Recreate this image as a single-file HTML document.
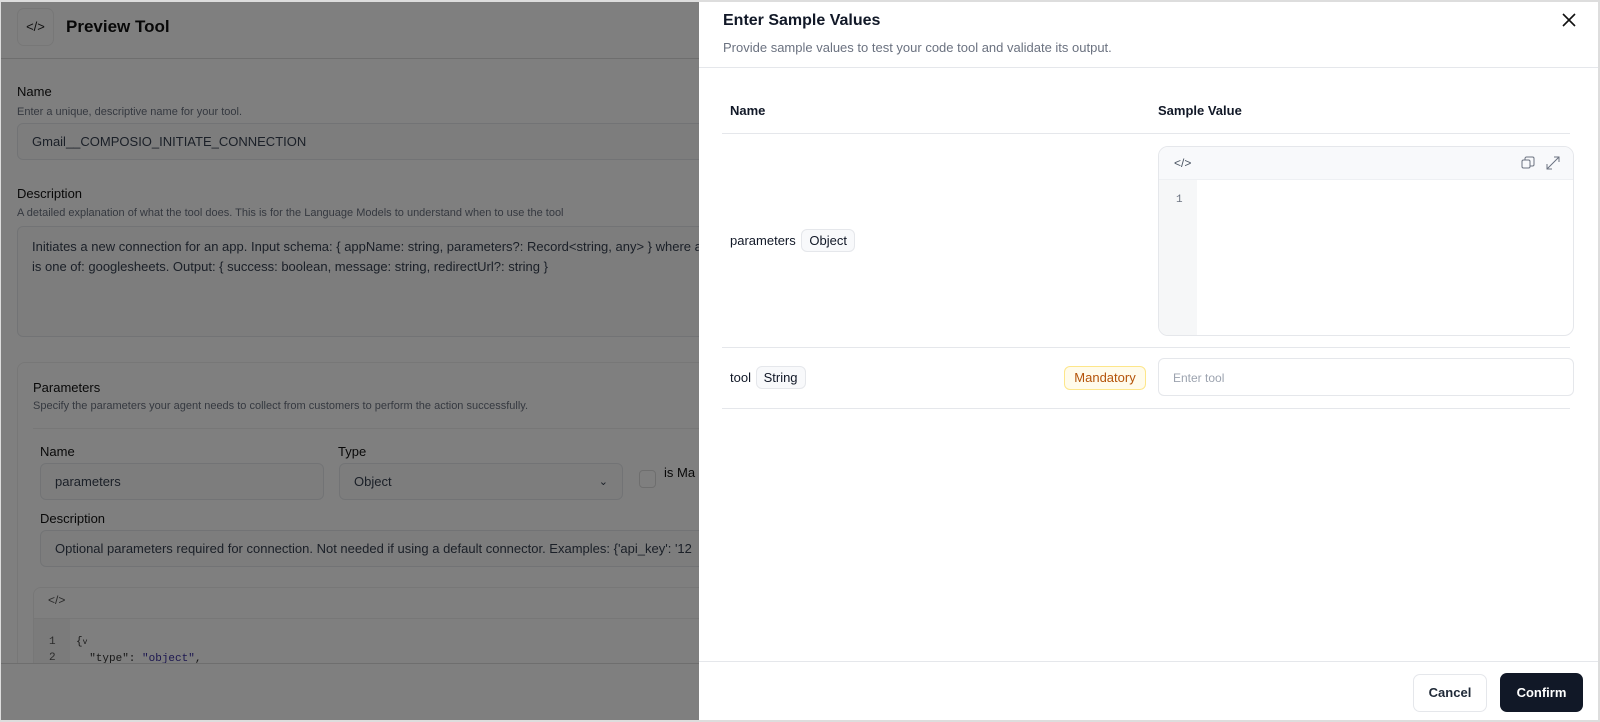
<!DOCTYPE html>
<html><head><meta charset="utf-8"><style>
*{box-sizing:border-box;margin:0;padding:0}
body{width:1600px;height:722px;overflow:hidden;font-family:"Liberation Sans",sans-serif;color:#1f2937;position:relative;background:#fff}
.a{position:absolute}
.pg{position:absolute;left:0;top:0;width:1600px;height:722px;background:#fff}
.lbl{font-size:13px;color:#111}
.hlp{font-size:11px;color:#6b7280}
.inp{border:1px solid #e5e7eb;border-radius:6px;background:#fbfbfb;font-size:13px;color:#374151;padding:0 14px;display:flex;align-items:center}
.ov{position:absolute;left:0;top:0;width:1600px;height:722px;background:rgba(0,0,0,0.5)}
.pn{position:absolute;left:699px;top:2px;width:899px;height:718px;background:#fff}
.badge{display:inline-block;border:1px solid #e5e7eb;background:#f8f9fb;border-radius:6px;font-size:13px;padding:3px 7px;color:#111827}
.mono{font-family:"Liberation Mono",monospace}
</style></head><body>
<div class="pg">
  <div class="a" style="left:17px;top:8px;width:37px;height:38px;border:1px solid #eee;border-radius:7px;font-size:13px;text-align:center;line-height:36px;color:#222">&lt;/&gt;</div>
  <div class="a" style="left:66px;top:17px;font-size:17px;font-weight:600;color:#111">Preview Tool</div>
  <div class="a" style="left:0;top:58px;width:1600px;border-top:1px solid #ddd"></div>
  <div class="a lbl" style="left:17px;top:84px">Name</div>
  <div class="a hlp" style="left:17px;top:106px">Enter a unique, descriptive name for your tool.</div>
  <div class="a inp" style="left:17px;top:123px;width:700px;height:37px">Gmail__COMPOSIO_INITIATE_CONNECTION</div>
  <div class="a lbl" style="left:17px;top:186px">Description</div>
  <div class="a hlp" style="left:17px;top:207px">A detailed explanation of what the tool does. This is for the Language Models to understand when to use the tool</div>
  <div class="a inp" style="left:17px;top:226px;width:700px;height:111px;align-items:flex-start;padding-top:10px;line-height:20px;font-size:13px">Initiates a new connection for an app. Input schema: { appName: string, parameters?: Record&lt;string, any&gt; } where a<br>is one of: googlesheets. Output: { success: boolean, message: string, redirectUrl?: string }</div>
  <div class="a" style="left:17px;top:362px;width:720px;height:320px;border:1px solid #eee;border-radius:8px"></div>
  <div class="a lbl" style="left:33px;top:380px">Parameters</div>
  <div class="a hlp" style="left:33px;top:400px">Specify the parameters your agent needs to collect from customers to perform the action successfully.</div>
  <div class="a" style="left:33px;top:428px;width:700px;border-top:1px solid #eee"></div>
  <div class="a lbl" style="left:40px;top:444px">Name</div>
  <div class="a lbl" style="left:338px;top:444px">Type</div>
  <div class="a inp" style="left:40px;top:463px;width:284px;height:37px">parameters</div>
  <div class="a inp" style="left:339px;top:463px;width:284px;height:37px;justify-content:space-between">Object<span style="font-size:11px">&#8964;</span></div>
  <div class="a" style="left:639px;top:470px;width:17px;height:18px;border:1px solid #ddd;border-radius:4px"></div>
  <div class="a lbl" style="left:664px;top:465px">is Ma</div>
  <div class="a lbl" style="left:40px;top:511px">Description</div>
  <div class="a inp" style="left:40px;top:530px;width:700px;height:37px">Optional parameters required for connection. Not needed if using a default connector. Examples: {'api_key': '12</div>
  <div class="a" style="left:33px;top:587px;width:710px;height:90px;border:1px solid #eee;border-radius:8px;background:#fff"></div>
  <div class="a" style="left:34px;top:618px;width:708px;border-top:1px solid #eee"></div>
  <div class="a" style="left:34px;top:619px;width:36px;height:50px;background:#f7f7f7"></div>
  <div class="a" style="left:48px;top:593px;font-size:12px;color:#555">&lt;/&gt;</div>
  <div class="a mono" style="left:49px;top:634px;font-size:11px;color:#555;line-height:16px">1<br>2</div>
  <div class="a mono" style="left:76px;top:634px;font-size:11px;color:#333;line-height:16px">{<span style="font-size:8px">v</span><br>&nbsp;&nbsp;"type": <span style="color:#3a2fa0">"object"</span>,</div>
  <div class="a" style="left:0;top:663px;width:1600px;height:59px;background:#fff;border-top:1px solid #ddd"></div>
</div>
<div class="ov"></div>
<div class="a" style="left:0;top:0;width:1600px;height:722px;border:2px solid #ddd;border-left-width:1px;pointer-events:none"></div>
<div class="pn">
  <div class="a" style="left:24px;top:10px;font-size:16px;font-weight:600;color:#111827">Enter Sample Values</div>
  <div class="a" style="left:24px;top:38px;font-size:13px;color:#6b7280">Provide sample values to test your code tool and validate its output.</div>
  <svg class="a" style="left:862px;top:10px" width="16" height="16" viewBox="0 0 16 16"><path d="M2 2L14 14M14 2L2 14" stroke="#111" stroke-width="1.6"/></svg>
  <div class="a" style="left:0;top:65px;width:899px;border-top:1px solid #e5e7eb"></div>
  <div class="a" style="left:31px;top:101px;font-size:13px;font-weight:600;color:#111827">Name</div>
  <div class="a" style="left:459px;top:101px;font-size:13px;font-weight:600;color:#111827">Sample Value</div>
  <div class="a" style="left:23px;top:131px;width:848px;border-top:1px solid #e5e7eb"></div>
  <div class="a" style="left:31px;top:227px;font-size:13px;color:#111827">parameters <span class="badge" style="margin-left:2px">Object</span></div>
  <div class="a" style="left:459px;top:144px;width:416px;height:190px;border:1px solid #e5e7eb;border-radius:10px;overflow:hidden">
    <div style="height:33px;background:#f8f9fb;border-bottom:1px solid #eef0f3;position:relative">
      <span class="a" style="left:15px;top:9px;font-size:12px;color:#4b5563">&lt;/&gt;</span>
      <svg class="a" style="left:362px;top:9px" width="14" height="14" viewBox="0 0 14 14"><rect x="1" y="4" width="8" height="8" rx="1.5" fill="none" stroke="#6b7280"/><path d="M4 4V2.5A1.5 1.5 0 0 1 5.5 1H11.5A1.5 1.5 0 0 1 13 2.5V8.5A1.5 1.5 0 0 1 11.5 10H9" fill="none" stroke="#6b7280"/></svg>
      <svg class="a" style="left:387px;top:9px" width="14" height="14" viewBox="0 0 14 14"><path d="M8 1H13V6M13 1L1 13M1 8V13H6" fill="none" stroke="#6b7280"/></svg>
    </div>
    <div class="a" style="left:0;top:33px;width:38px;height:160px;background:#f6f7f8"></div>
    <div class="a mono" style="left:17px;top:47px;font-size:11px;color:#6b7280">1</div>
  </div>
  <div class="a" style="left:23px;top:345px;width:848px;border-top:1px solid #e5e7eb"></div>
  <div class="a" style="left:31px;top:364px;font-size:13px;color:#111827">tool <span class="badge" style="margin-left:1px">String</span></div>
  <div class="a" style="left:365px;top:364px;width:82px;height:24px;border:1px solid #fde68a;background:#fffbeb;border-radius:6px;font-size:13px;color:#b45309;text-align:center;line-height:22px">Mandatory</div>
  <div class="a" style="left:459px;top:356px;width:416px;height:38px;border:1px solid #e5e7eb;border-radius:6px;font-size:12px;color:#9ca3af;padding:12px 14px">Enter tool</div>
  <div class="a" style="left:23px;top:406px;width:848px;border-top:1px solid #e5e7eb"></div>
  <div class="a" style="left:0;top:659px;width:899px;border-top:1px solid #e5e7eb"></div>
  <div class="a" style="left:714px;top:672px;width:74px;height:38px;border:1px solid #e5e7eb;border-radius:7px;font-size:13px;font-weight:600;color:#1f2937;text-align:center;line-height:36px">Cancel</div>
  <div class="a" style="left:801px;top:671px;width:83px;height:39px;background:#111827;border-radius:7px;font-size:13px;font-weight:700;color:#fff;text-align:center;line-height:39px">Confirm</div>
</div>
</body></html>
